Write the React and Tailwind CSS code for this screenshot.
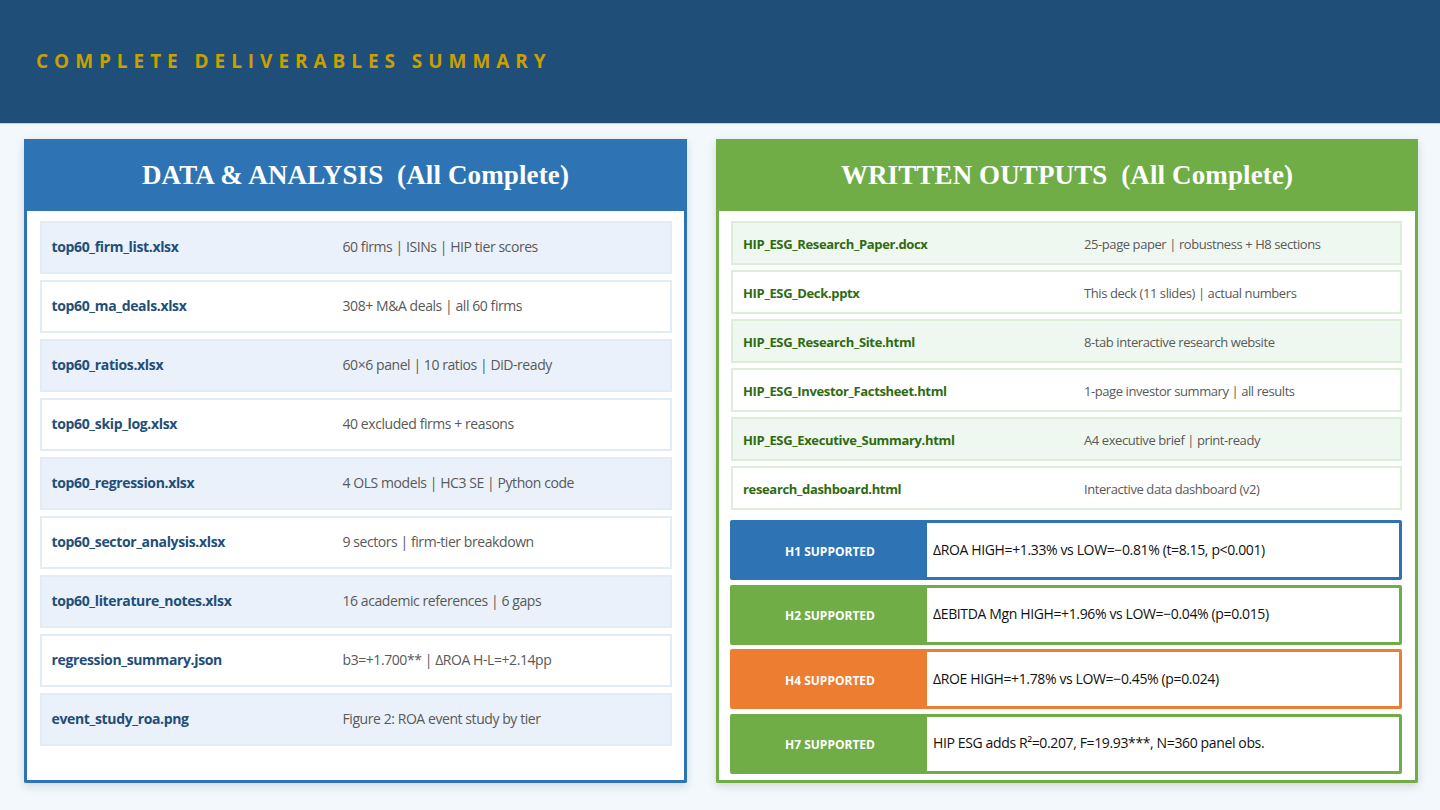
const dataRows = [
  ["top60_firm_list.xlsx", "60 firms | ISINs | HIP tier scores"],
  ["top60_ma_deals.xlsx", "308+ M&A deals | all 60 firms"],
  ["top60_ratios.xlsx", "60×6 panel | 10 ratios | DiD-ready"],
  ["top60_skip_log.xlsx", "40 excluded firms + reasons"],
  ["top60_regression.xlsx", "4 OLS models | HC3 SE | Python code"],
  ["top60_sector_analysis.xlsx", "9 sectors | firm-tier breakdown"],
  ["top60_literature_notes.xlsx", "16 academic references | 6 gaps"],
  ["regression_summary.json", "b3=+1.700** | ΔROA H-L=+2.14pp"],
  ["event_study_roa.png", "Figure 2: ROA event study by tier"],
];

const writtenRows = [
  ["HIP_ESG_Research_Paper.docx", "25-page paper | robustness + H8 sections"],
  ["HIP_ESG_Deck.pptx", "This deck (11 slides) | actual numbers"],
  ["HIP_ESG_Research_Site.html", "8-tab interactive research website"],
  ["HIP_ESG_Investor_Factsheet.html", "1-page investor summary | all results"],
  ["HIP_ESG_Executive_Summary.html", "A4 executive brief | print-ready"],
  ["research_dashboard.html", "Interactive data dashboard (v2)"],
];

const hypotheses = [
  { label: "H1 SUPPORTED", text: "ΔROA HIGH=+1.33% vs LOW=−0.81% (t=8.15, p<0.001)", border: "border-[#2e74b5]", bg: "bg-[#2e74b5]" },
  { label: "H2 SUPPORTED", text: "ΔEBITDA Mgn HIGH=+1.96% vs LOW=−0.04% (p=0.015)", border: "border-[#70ad47]", bg: "bg-[#70ad47]" },
  { label: "H4 SUPPORTED", text: "ΔROE HIGH=+1.78% vs LOW=−0.45% (p=0.024)", border: "border-[#ed7d31]", bg: "bg-[#ed7d31]" },
  { label: "H7 SUPPORTED", text: "HIP ESG adds R²=0.207, F=19.93***, N=360 panel obs.", border: "border-[#70ad47]", bg: "bg-[#70ad47]" },
];

function PanelTitle({ bg, children }) {
  return (
    <div className={`h-[72px] pb-[1px] shrink-0 flex items-center justify-center ${bg}`}>
      <h2 className="font-['Liberation_Serif',serif] font-bold text-[27px] leading-[38px] tracking-[0.12px] text-white whitespace-pre">{children}</h2>
    </div>
  );
}

export default function App() {
  return (
    <div className="w-[1440px] h-[810px] overflow-hidden bg-[#f3f8fc] font-['Open_Sans',sans-serif]">
      <header className="h-[124px] bg-[#1f4e79] border-b border-[#c9d3dc] flex items-start pl-9 pt-[49px]">
        <h1 className="text-[#c9a000] font-bold text-[19px] leading-6 tracking-[5.95px] whitespace-pre">COMPLETE DELIVERABLES SUMMARY</h1>
      </header>
      <main className="flex gap-[29px] pl-6 pt-[15px]">
        <section className="w-[663px] h-[644px] flex flex-col bg-white border-[3px] border-t-0 border-[#2e74b5] rounded-[2px] shadow-[0_3px_10px_rgba(0,0,0,0.14)]">
          <div className="-mx-[3px]">
            <PanelTitle bg="bg-[#2e74b5]">DATA &amp; ANALYSIS  (All Complete)</PanelTitle>
          </div>
          <div className="flex flex-col gap-[6px] pt-[10px] px-[12.5px]">
            {dataRows.map(([name, desc], i) => (
              <div key={name} className={`h-[53px] pb-[2px] flex items-center border-2 border-[#e2ecf6] pl-[10px] ${i % 2 === 0 ? "bg-[#eaf1fa]" : "bg-white"}`}>
                <span className="w-[291px] shrink-0 text-[14px] font-bold text-[#1f4e79] tracking-[-0.35px]">{name}</span>
                <span className="text-[14px] text-[#595959] tracking-[-0.43px]">{desc}</span>
              </div>
            ))}
          </div>
        </section>
        <section className="w-[702px] h-[644px] flex flex-col bg-white border-[3px] border-t-0 border-[#70ad47] rounded-[2px] shadow-[0_3px_10px_rgba(0,0,0,0.14)]">
          <div className="-mx-[3px]">
            <PanelTitle bg="bg-[#70ad47]">WRITTEN OUTPUTS  (All Complete)</PanelTitle>
          </div>
          <div className="flex flex-col gap-[5px] pt-[10px] pl-[12px] pr-[13px]">
            {writtenRows.map(([name, desc], i) => (
              <div key={name} className={`h-[44px] pt-[3px] flex items-center border-2 border-[#dcedd8] pl-[10px] ${i % 2 === 0 ? "bg-[#eff8f0]" : "bg-white"}`}>
                <span className="w-[341px] shrink-0 text-[13px] font-bold text-[#2f6b10] tracking-[-0.34px]">{name}</span>
                <span className="text-[13px] text-[#595959] tracking-[-0.42px]">{desc}</span>
              </div>
            ))}
          </div>
          <div className="flex flex-col gap-[4.5px] mt-[10px] pl-[11px] pr-[13px]">
            {hypotheses.map((h) => (
              <div key={h.label} className={`h-[60px] flex items-stretch bg-white border-[3px] rounded-[2px] ${h.border}`}>
                <div className={`w-[194px] pt-[3px] shrink-0 flex items-center justify-center ${h.bg}`}>
                  <span className="text-[12px] font-bold text-white">{h.label}</span>
                </div>
                <div className="flex items-center pl-[6px] pb-[2px] text-[14px] text-[#111111] tracking-[-0.37px]">{h.text}</div>
              </div>
            ))}
          </div>
        </section>
      </main>
    </div>
  );
}
